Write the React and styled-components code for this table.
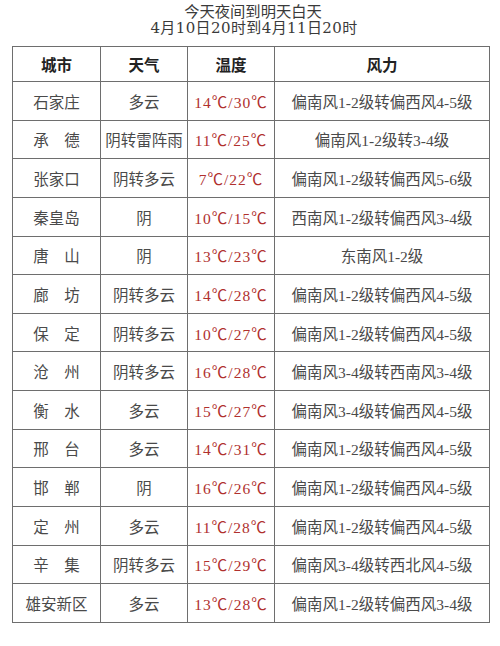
import styled, { createGlobalStyle } from 'styled-components'

const rows = [
  ['石家庄', '多云', '14℃/30℃', '偏南风1-2级转偏西风4-5级'],
  ['承　德', '阴转雷阵雨', '11℃/25℃', '偏南风1-2级转3-4级'],
  ['张家口', '阴转多云', '7℃/22℃', '偏南风1-2级转偏西风5-6级'],
  ['秦皇岛', '阴', '10℃/15℃', '西南风1-2级转偏西风3-4级'],
  ['唐　山', '阴', '13℃/23℃', '东南风1-2级'],
  ['廊　坊', '阴转多云', '14℃/28℃', '偏南风1-2级转偏西风4-5级'],
  ['保　定', '阴转多云', '10℃/27℃', '偏南风1-2级转偏西风4-5级'],
  ['沧　州', '阴转多云', '16℃/28℃', '偏南风3-4级转西南风3-4级'],
  ['衡　水', '多云', '15℃/27℃', '偏南风3-4级转偏西风4-5级'],
  ['邢　台', '多云', '14℃/31℃', '偏南风1-2级转偏西风4-5级'],
  ['邯　郸', '阴', '16℃/26℃', '偏南风1-2级转偏西风4-5级'],
  ['定　州', '多云', '11℃/28℃', '偏南风1-2级转偏西风4-5级'],
  ['辛　集', '阴转多云', '15℃/29℃', '偏南风3-4级转西北风4-5级'],
  ['雄安新区', '多云', '13℃/28℃', '偏南风1-2级转偏西风3-4级'],
]

const App = () => {
  return (
    <Page>
      <GlobalStyle />
      <Title>
        <div>今天夜间到明天白天</div>
        <DateLine>4月10日20时到4月11日20时</DateLine>
      </Title>
      <Table>
        <colgroup>
          <col style={{ width: 88 }} />
          <col style={{ width: 87 }} />
          <col style={{ width: 87 }} />
          <col />
        </colgroup>
        <thead>
          <HeadRow>
            <HeadCell>城市</HeadCell>
            <HeadCell>天气</HeadCell>
            <HeadCell>温度</HeadCell>
            <HeadCell>风力</HeadCell>
          </HeadRow>
        </thead>
        <tbody>
          {rows.map(([city, weather, temp, wind]) => (
            <Row key={city}>
              <Cell>{city}</Cell>
              <Cell>{weather}</Cell>
              <Cell $red>{temp}</Cell>
              <Cell $wide>{wind}</Cell>
            </Row>
          ))}
        </tbody>
      </Table>
    </Page>
  )
}

export default App

const GlobalStyle = createGlobalStyle`
  body {
    margin: 0;
    background: #fff;
    font-family: "Liberation Serif", "Noto Sans CJK SC", serif;
  }
`

const Page = styled.div`
  width: 500px;
  height: 646px;
  padding: 4px 10px 0 12px;
  box-sizing: border-box;
`

const Title = styled.div`
  text-align: center;
  font-size: 15.3px;
  line-height: 16px;
  color: #3a3a3a;
  margin-bottom: 10px;
  padding-left: 4px;
`

const DateLine = styled.div`
  font-family: "DejaVu Serif", "Noto Sans CJK SC", serif;
  font-size: 15px;
  letter-spacing: 0.4px;
  padding-left: 2px;
`

const Table = styled.table`
  width: 478px;
  border-collapse: collapse;
  table-layout: fixed;
`

const HeadRow = styled.tr`
  height: 35px;
`

const Row = styled.tr`
  height: 38.64px;
`

const HeadCell = styled.th`
  border: 1px solid #6e6e6e;
  padding: 0;
  font-size: 15.5px;
  font-weight: 600;
  color: #222;
  text-align: center;
`

const Cell = styled.td`
  border: 1px solid #6e6e6e;
  padding: 0;
  font-size: 15.5px;
  color: ${(p) => (p.$red ? '#b0302e' : '#4a4a4a')};
  letter-spacing: ${(p) => (p.$red ? '1px' : '0')};
  text-align: center;
  white-space: nowrap;
`
